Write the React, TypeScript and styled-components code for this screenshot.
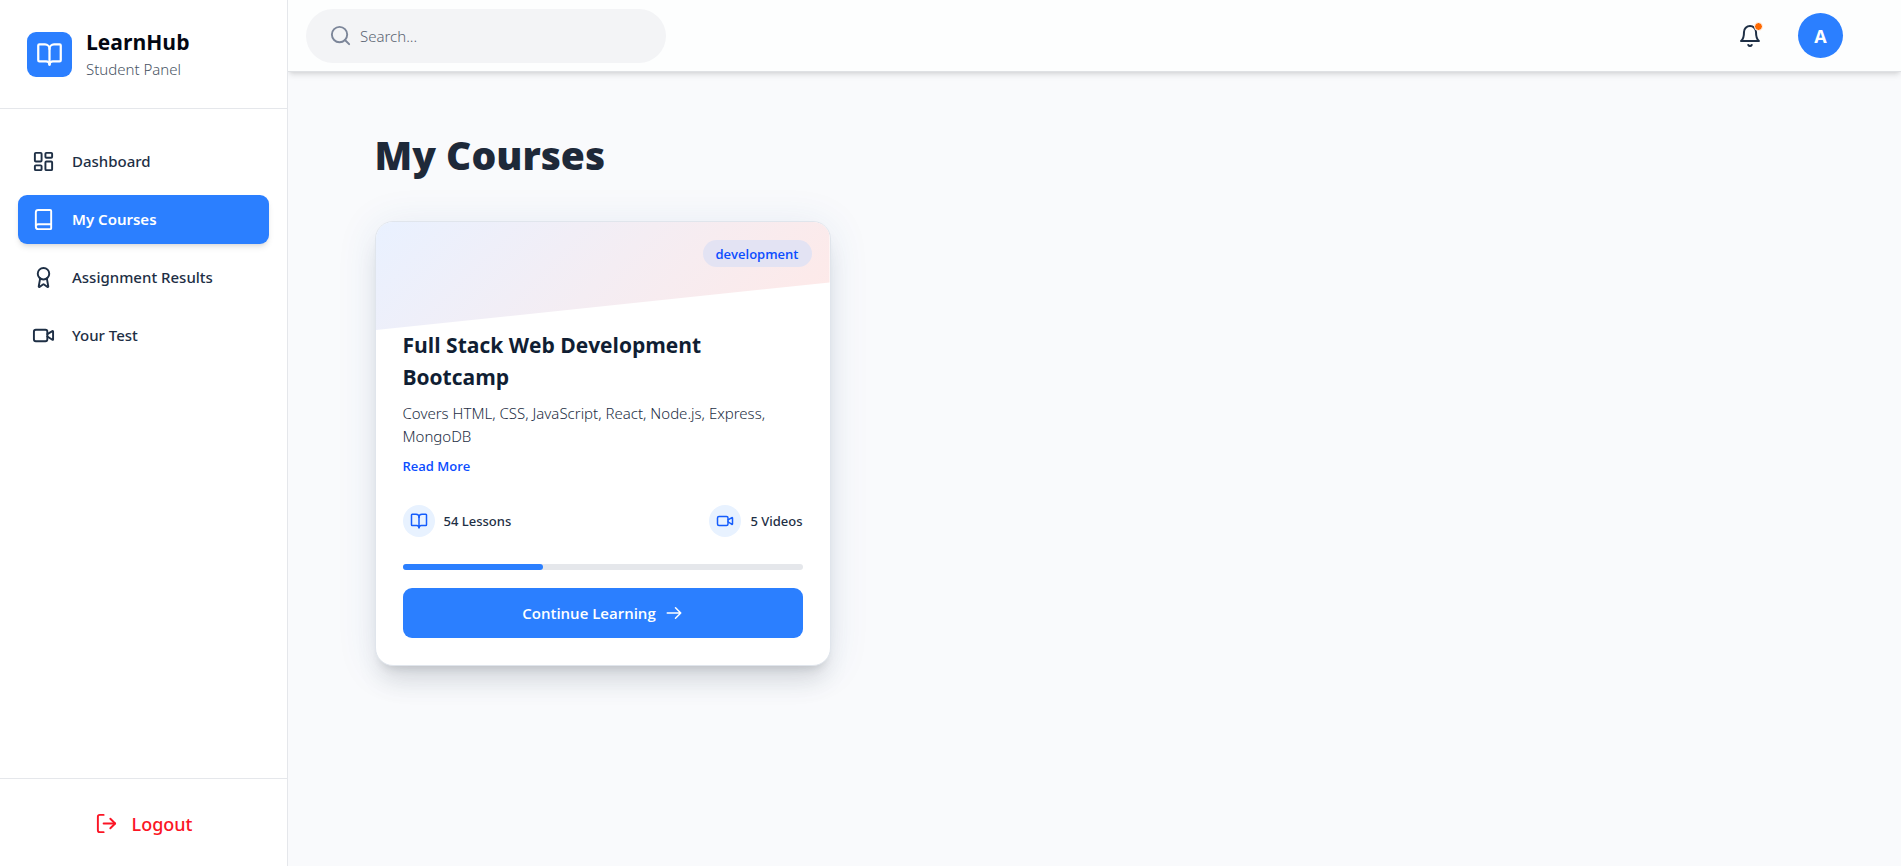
import React from 'react';
import styled, { createGlobalStyle } from 'styled-components';
import { Award, Book, BookOpen, LayoutDashboard, LogOut, Search, Video } from 'lucide-react';

const notoStack = '"Segoe UI", "Noto Sans", "Open Sans", sans-serif';

const GlobalStyle = createGlobalStyle`
  *, *::before, *::after { box-sizing: border-box; }
  body { margin: 0; background: #f9fafb; }
  body, button, input {
    font-family: "Segoe UI", "Open Sans", "Noto Sans", sans-serif;
    font-size: 15px;
  }
  h1, h2, p { margin: 0; padding: 0; }
  svg { flex-shrink: 0; }
`;

const Shell = styled.div`
  display: flex;
  min-height: 100vh;
  background: #f9fafc;
`;

const Sidebar = styled.aside`
  position: relative;
  z-index: 1;
  display: flex;
  flex-direction: column;
  flex: 0 0 288px;
  background: #fff;
  border-right: 1px solid #e5e7eb;
`;

const Brand = styled.div`
  display: flex;
  align-items: center;
  gap: 14px;
  padding: 27px;
  border-bottom: 1px solid #e5e7eb;
`;

const BrandMark = styled.div`
  display: grid;
  place-items: center;
  width: 45px;
  height: 45px;
  border-radius: 9px;
  background: #2b7fff;
  color: #fff;
`;

const BrandName = styled.p`
  font-size: 21px;
  line-height: 30px;
  font-weight: 700;
  color: #030712;
`;

const BrandRole = styled.p`
  font-family: ${notoStack};
  font-weight: 300;
  line-height: 24px;
  color: #4a5565;
`;

const NavList = styled.nav`
  display: flex;
  flex: 1;
  flex-direction: column;
  gap: 9px;
  padding: 28px 18px;
`;

const NavLink = styled.a<{ $active?: boolean }>`
  display: flex;
  align-items: center;
  gap: 17px;
  height: 49px;
  padding: 0 14px 1px;
  border-radius: 9px;
  font-family: ${notoStack};
  font-weight: ${({ $active }) => ($active ? 600 : 500)};
  text-decoration: none;
  color: ${({ $active }) => ($active ? '#fff' : '#1e2f45')};
  background: ${({ $active }) => ($active ? '#2b7fff' : 'transparent')};
  box-shadow: ${({ $active }) => ($active ? '0 4px 6px -1px rgba(0,0,0,.1), 0 2px 4px -2px rgba(0,0,0,.1)' : 'none')};
`;

const SidebarFooter = styled.div`
  padding: 19px 18px 17px;
  border-top: 1px solid #e5e7eb;
`;

const LogoutButton = styled.button`
  display: flex;
  align-items: center;
  justify-content: center;
  gap: 14px;
  width: 100%;
  height: 51px;
  padding: 0;
  border: 0;
  background: none;
  color: #fb1525;
  font-family: ${notoStack};
  font-size: 18px;
  font-weight: 500;
  cursor: pointer;
`;

const Content = styled.div`
  display: flex;
  flex: 1;
  flex-direction: column;
  min-width: 0;
`;

const TopBar = styled.header`
  display: flex;
  align-items: center;
  justify-content: space-between;
  height: 72px;
  padding: 0 58px 0 18px;
  background: #fdfefe;
  border-bottom: 1px solid #dfe1e4;
  box-shadow: 0 4px 6px -1px rgba(0, 0, 0, .1), 0 2px 4px -2px rgba(0, 0, 0, .1);
`;

const SearchBox = styled.label`
  display: flex;
  align-items: center;
  gap: 8px;
  width: 360px;
  height: 54px;
  padding: 0 23px;
  border-radius: 27px;
  background: #f3f4f6;
  color: #7c8699;
`;

const SearchInput = styled.input`
  flex: 1;
  min-width: 0;
  padding: 0;
  border: 0;
  outline: 0;
  background: none;
  font-family: ${notoStack};
  font-weight: 300;
  color: #1e2939;
  &::placeholder { color: #5b6473; opacity: 1; }
`;

const Actions = styled.div`
  display: flex;
  align-items: center;
  gap: 36px;
`;

const BellButton = styled.button`
  position: relative;
  display: flex;
  padding: 0;
  border: 0;
  background: none;
  color: #1e2f45;
  cursor: pointer;
`;

const Dot = styled.span`
  position: absolute;
  top: -2px;
  right: -1px;
  width: 9px;
  height: 9px;
  border-radius: 50%;
  background: #ff6900;
  border: 1px solid #fff;
`;

const Avatar = styled.button`
  width: 45px;
  height: 45px;
  padding: 0;
  border: 0;
  border-radius: 50%;
  background: #2b7fff;
  color: #fff;
  font-size: 18px;
  font-weight: 700;
  cursor: pointer;
`;

const Main = styled.main`
  width: 100%;
  max-width: 1440px;
  margin: 0 auto;
  padding: 54px 0;
`;

const PageTitle = styled.h1`
  margin-bottom: 38px;
  font-size: 39px;
  line-height: 57px;
  font-weight: 800;
  color: #1e2939;
`;

const CourseGrid = styled.div`
  display: grid;
  grid-template-columns: repeat(3, minmax(0, 1fr));
  gap: 36px;
`;

const Card = styled.article`
  position: relative;
  display: flex;
  flex-direction: column;
  overflow: hidden;
  padding: 107px 27px 27px;
  border: 1px solid #e0e5ec;
  border-radius: 18px;
  background: #fff;
  box-shadow:
    0 20px 25px -5px rgba(0, 0, 0, .1),
    0 8px 10px -6px rgba(0, 0, 0, .12),
    0 4px 40px rgba(43, 90, 160, .1);
`;

const CardBanner = styled.div`
  position: absolute;
  inset: 0 0 auto;
  height: 108px;
  background: linear-gradient(135deg, #e9f1ff, #ffe9e7);
  clip-path: polygon(0 0, 100% 0, 100% 56%, 0 100%);
`;

const Badge = styled.span`
  position: absolute;
  top: 18px;
  right: 18px;
  padding: 2px 13px 0;
  border-radius: 14px;
  background: #e3e3f3;
  color: #0b4dff;
  font-size: 13px;
  line-height: 25px;
  font-weight: 600;
`;

const CourseTitle = styled.h2`
  font-size: 21px;
  line-height: 32px;
  font-weight: 700;
  color: #101e33;
`;

const CourseText = styled.p`
  margin-top: 9px;
  font-family: ${notoStack};
  font-weight: 300;
  line-height: 23px;
  color: #1e2f45;
`;

const ReadMore = styled.button`
  align-self: flex-start;
  margin-top: 7px;
  padding: 0;
  border: 0;
  background: none;
  color: #0b4dff;
  font-size: 13px;
  line-height: 22px;
  font-weight: 600;
  cursor: pointer;
`;

const Stats = styled.div`
  display: flex;
  justify-content: space-between;
  margin: 28px 0 27px;
`;

const Stat = styled.div`
  display: flex;
  align-items: center;
  gap: 9px;
  font-family: ${notoStack};
  font-size: 13px;
  font-weight: 500;
  color: #1e2f45;
`;

const StatIcon = styled.span`
  display: grid;
  place-items: center;
  width: 32px;
  height: 32px;
  border-radius: 50%;
  background: #e8f2ff;
  color: #155dfc;
`;

const ProgressTrack = styled.div`
  height: 6px;
  border-radius: 3px;
  background: #e5e7eb;
`;

const ProgressFill = styled.div`
  height: 100%;
  border-radius: 3px;
  background: #2b7fff;
`;

const ContinueButton = styled.button`
  display: flex;
  align-items: center;
  justify-content: center;
  gap: 9px;
  height: 50px;
  margin-top: 18px;
  padding: 0;
  border: 0;
  border-radius: 9px;
  background: #2b7fff;
  color: #fff;
  font-weight: 600;
  cursor: pointer;
`;

const LineIcon = ({ size, children }: { size: number; children: React.ReactNode }) => (
  <svg
    width={size}
    height={size}
    viewBox="0 0 24 24"
    fill="none"
    stroke="currentColor"
    strokeWidth="2"
    strokeLinecap="round"
    strokeLinejoin="round"
    aria-hidden="true"
  >
    {children}
  </svg>
);

const LongArrow = () => (
  <LineIcon size={18}>
    <path d="M14 5l7 7m0 0l-7 7m7-7H3" />
  </LineIcon>
);

const FlatBell = () => (
  <LineIcon size={24}>
    <path d="M6 8a6 6 0 0 1 12 0c0 7 3 9 3 9H3s3-2 3-9" />
    <path d="M10.3 21a1.94 1.94 0 0 0 3.4 0" />
  </LineIcon>
);

const navItems = [
  { label: 'Dashboard', icon: LayoutDashboard },
  { label: 'My Courses', icon: Book, active: true },
  { label: 'Assignment Results', icon: Award },
  { label: 'Your Test', icon: Video },
];

const course = {
  category: 'development',
  title: 'Full Stack Web Development Bootcamp',
  text: 'Covers HTML, CSS, JavaScript, React, Node.js, Express, MongoDB',
  lessons: 54,
  videos: 5,
  progress: 35,
};

export default function App() {
  return (
    <>
      <GlobalStyle />
      <Shell>
        <Sidebar>
          <Brand>
            <BrandMark><BookOpen size={27} /></BrandMark>
            <div>
              <BrandName>LearnHub</BrandName>
              <BrandRole>Student Panel</BrandRole>
            </div>
          </Brand>
          <NavList aria-label="Main">
            {navItems.map(({ label, icon: Icon, active }) => (
              <NavLink key={label} href="#" $active={active} aria-current={active ? 'page' : undefined}>
                <Icon size={23} />
                {label}
              </NavLink>
            ))}
          </NavList>
          <SidebarFooter>
            <LogoutButton type="button"><LogOut size={23} />Logout</LogoutButton>
          </SidebarFooter>
        </Sidebar>
        <Content>
          <TopBar>
            <SearchBox>
              <Search size={23} />
              <SearchInput type="text" placeholder="Search..." aria-label="Search" />
            </SearchBox>
            <Actions>
              <BellButton type="button" aria-label="Notifications"><FlatBell /><Dot /></BellButton>
              <Avatar type="button">A</Avatar>
            </Actions>
          </TopBar>
          <Main>
            <PageTitle>My Courses</PageTitle>
            <CourseGrid>
              <Card>
                <CardBanner />
                <Badge>{course.category}</Badge>
                <CourseTitle>{course.title}</CourseTitle>
                <CourseText>{course.text}</CourseText>
                <ReadMore type="button">Read More</ReadMore>
                <Stats>
                  <Stat><StatIcon><BookOpen size={18} /></StatIcon>{course.lessons} Lessons</Stat>
                  <Stat><StatIcon><Video size={18} /></StatIcon>{course.videos} Videos</Stat>
                </Stats>
                <ProgressTrack role="progressbar" aria-label="Course progress" aria-valuenow={course.progress}>
                  <ProgressFill style={{ width: `${course.progress}%` }} />
                </ProgressTrack>
                <ContinueButton type="button">Continue Learning<LongArrow /></ContinueButton>
              </Card>
            </CourseGrid>
          </Main>
        </Content>
      </Shell>
    </>
  );
}
